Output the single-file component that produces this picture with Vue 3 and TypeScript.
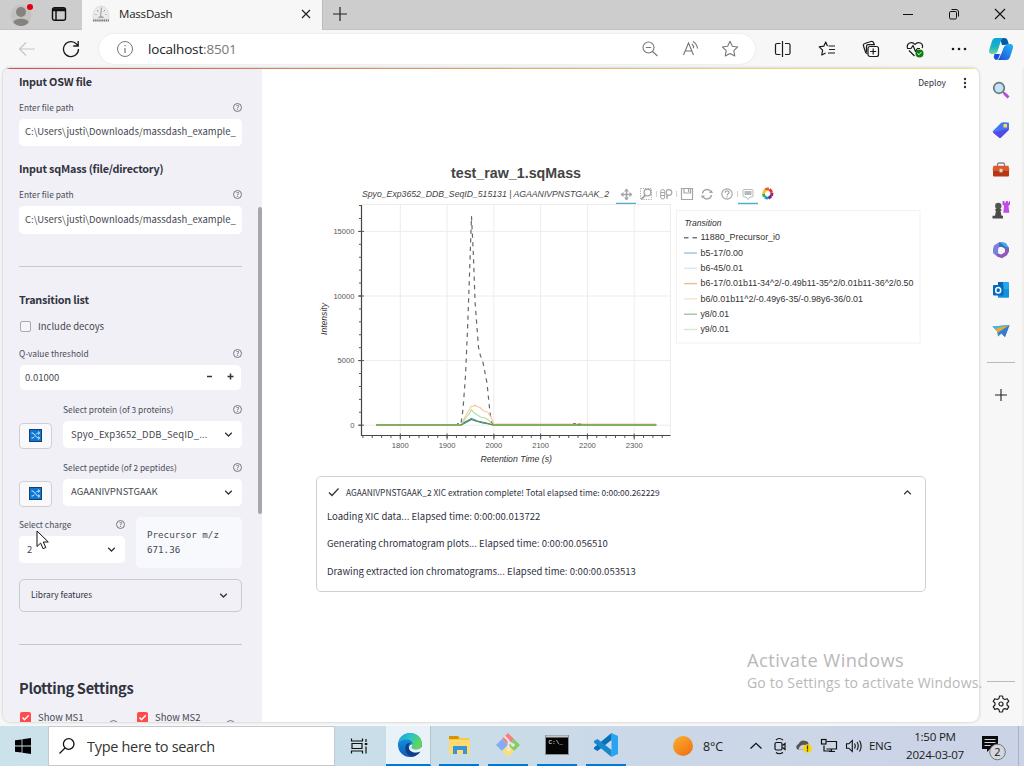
<script setup lang="ts">
interface LegendItem { label: string; color: string; width: number; dash?: string }

const X0 = 400.3, XS = 0.4678, Y0 = 425.2, YS = 0.01292
const px = (v: number): number => X0 + (v - 1800) * XS
const py = (v: number): number => Y0 - v * YS

const xMajor: number[] = [1800, 1900, 2000, 2100, 2200, 2300]
const yMajor: number[] = [0, 5000, 10000, 15000]
const xMinor: number[] = Array.from({ length: 33 }, (_, i) => 1720 + i * 20)
const yMinor: number[] = Array.from({ length: 18 }, (_, i) => i * 1000)

const legend: LegendItem[] = [
  { label: '11880_Precursor_i0', color: '#777', width: 79.5, dash: '4.5 4' },
  { label: 'b5-17/0.00', color: '#a3c6e0', width: 42.5 },
  { label: 'b6-45/0.01', color: '#dbe7f1', width: 42.5 },
  { label: 'b6-17/0.01b11-34^2/-0.49b11-35^2/0.01b11-36^2/0.50', color: '#e6be93', width: 213 },
  { label: 'b6/0.01b11^2/-0.49y6-35/-0.98y6-36/0.01', color: '#fbe3c6', width: 162.5 },
  { label: 'y8/0.01', color: '#a0c5a0', width: 28.5 },
  { label: 'y9/0.01', color: '#d3ead0', width: 28.5 },
]

const steps: string[] = [
  'Loading XIC data... Elapsed time: 0:00:00.013722',
  'Generating chromatogram plots... Elapsed time: 0:00:00.056510',
  'Drawing extracted ion chromatograms... Elapsed time: 0:00:00.053513',
]

const pickers = [
  { label: 'Select protein (of 3 proteins)', value: 'Spyo_Exp3652_DDB_SeqID_...', kind: 'protein' },
  { label: 'Select peptide (of 2 peptides)', value: 'AGAANIVPNSTGAAK', kind: 'peptide' },
]
</script>

<template>
  <div class="desktop">
    <header class="titlebar">
      <div class="profile">
        <svg width="24" height="28" viewBox="0 0 24 28"><circle cx="12" cy="14.500" r="10.500" fill="#c4c2c0" /><circle cx="12" cy="11" r="5" fill="#85837f" /><path d="M4.500 21.500c0-5 15-5 15 0c-3 4.500-12 4.500-15 0z" fill="#85837f" /><circle cx="21" cy="6" r="3" fill="#e1000f" /></svg>
      </div>
      <div class="tabmenu">
        <svg width="16" height="16" viewBox="0 0 16 16" fill="none" stroke="#111" stroke-width="1.400"><rect x="1.500" y="1.700" width="13" height="12.600" rx="2" /><path d="M1.500 4.500h13M5 4.500v9.500" /><path d="M2 3.200h12" stroke-width="2" /></svg>
      </div>
      <div class="tab">
        <svg width="18" height="18" viewBox="0 0 18 18"><path d="M1.500 14C0 7 4 1 9 1s9 6 7.500 13z" fill="#ebebeb" stroke="#d3d3d3" stroke-width=".7" /><path d="M9.400 2.500L8.500 13M3.500 9l1 1M5 5l1.300 1.500M13 5l-1.300 1.500M14.500 9l-1 1" stroke="#999" stroke-width="1" /><path d="M6 13c1-3 5-3 6 0z" fill="#aaa" /><path d="M1 15.500h16" stroke="#777" stroke-width="2.200" stroke-dasharray="1.500 .6" /></svg>
        <span class="tabname">MassDash</span>
        <svg class="tabclose" width="10" height="10" viewBox="0 0 10 10" stroke="#222" stroke-width="1.200"><path d="M1 1l8 8M9 1l-8 8" /></svg>
      </div>
      <svg class="newtab" width="14" height="14" viewBox="0 0 14 14" stroke="#222" stroke-width="1.200"><path d="M0 7h14M7 0v14" /></svg>
      <div class="wincontrols">
        <svg width="12" height="12" viewBox="0 0 12 12" stroke="#111"><path d="M1 6.500h10" /></svg>
        <svg width="12" height="12" viewBox="0 0 12 12" fill="none" stroke="#111"><rect x="1.500" y="3.500" width="7" height="7.500" rx="1.300" /><path d="M3.500 1.500h4.500q2.500 0 2.500 2.500v4.500" /></svg>
        <svg width="12" height="12" viewBox="0 0 12 12" stroke="#111" stroke-width="1.100"><path d="M1 1l10 10M11 1l-10 10" /></svg>
      </div>
    </header>

    <nav class="toolbar">
      <div class="navbtn"><svg width="18" height="16" viewBox="0 0 18 16" fill="none" stroke="#c6c6c6" stroke-width="1.200"><path d="M17 8H1.500M8 1.500L1.500 8L8 14.500" /></svg></div>
      <div class="navbtn"><svg width="18" height="18" viewBox="0 0 18 18" fill="none" stroke="#1b1b1b" stroke-width="1.300"><path d="M16.500 9A7.500 7.500 0 1 1 14.500 4L16 5.500M16.200 1v5h-5" /></svg></div>
      <div class="address">
        <svg class="info" width="18" height="18" viewBox="0 0 18 18" fill="none" stroke="#777"><circle cx="9" cy="9" r="7.500" /><path d="M9 8v5M9 5v1.300" stroke-width="1.200" /></svg>
        <span class="url">localhost<i>:8501</i></span>
        <div class="addrtools">
          <svg width="18" height="18" viewBox="0 0 18 18" fill="none" stroke="#777" stroke-width="1.100"><circle cx="7.500" cy="7.500" r="5.500" /><path d="M4.800 7.500h5.400M11.500 11.500l5 4.500" /></svg>
          <svg width="18" height="18" viewBox="0 0 18 18" fill="none" stroke="#777" stroke-width="1.100"><path d="M2.500 15L7.500 3L12.500 15M4.200 11h6.600M10.800 4q2 1.500 1.700 4.200M12 1.500q4 2.500 4.500 7" /></svg>
          <svg width="18" height="18" viewBox="0 0 18 18" fill="none" stroke="#777" stroke-width="1.100" stroke-linejoin="round"><path d="M9 1.300l2.350 4.900 5.350.75-3.900 3.750.95 5.300L9 13.500 4.250 16l.95-5.300L1.300 6.950l5.350-.75z" /></svg>
        </div>
      </div>
      <div class="tools">
        <svg width="18" height="18" viewBox="0 0 18 18" fill="none" stroke="#1b1b1b" stroke-width="1.200"><path d="M6.500 3.500H3q-1.500 0-1.500 1.500v8q0 1.500 1.500 1.500h3.500M11 3.500h3.500q1.500 0 1.500 1.500v8q0 1.500-1.500 1.500H11M8.500 1v16" /></svg>
        <svg width="18" height="18" viewBox="0 0 18 18" fill="none" stroke="#1b1b1b" stroke-width="1.200" stroke-linejoin="round"><path d="M10.500 6H17M11 9.500h6M10 13h7M9.500 6L7.700 2 5.800 6.200 1.200 6.800l3.400 3.400-.8 4.800 3.800-2" /></svg>
        <svg width="18" height="18" viewBox="0 0 18 18" fill="none" stroke="#1b1b1b" stroke-width="1.200"><rect x="6" y="6.500" width="10.500" height="10" rx="2" /><path d="M11.200 8.500v6M8.200 11.500h6M5.500 13.500Q4 13.500 3.500 12L1.500 6q-.5-2 1.300-2.500L9 1.500q2-.5 2.700 1.500l.5 1.500M4.500 12V6.500q0-1.800 1.800-1.800H13" /></svg>
        <svg width="18" height="18" viewBox="0 0 18 18" fill="none" stroke="#1b1b1b" stroke-width="1.200" stroke-linejoin="round"><path d="M1.500 8C0 3.500 6 .5 9 4.500C12 .5 18 3.500 16.200 8M3 10.500l5.500 5.500M1 8.500h4l2-3 2.500 6 1.800-3H14" /><circle cx="13.500" cy="13.500" r="4" fill="#107c10" stroke="none" /><path d="M11.500 13.500l1.500 1.200 2.300-2.500" stroke="#fff" stroke-width="1" /></svg>
        <svg width="18" height="18" viewBox="0 0 18 18" fill="#1b1b1b"><circle cx="3" cy="9" r="1.300" /><circle cx="9" cy="9" r="1.300" /><circle cx="15" cy="9" r="1.300" /></svg>
      </div>
      <div class="copilot">
        <svg width="26" height="26" viewBox="0 0 26 26">
          <defs><linearGradient id="cpa" x1="0" y1="0" x2="0" y2="1"><stop offset="0" stop-color="#09a5dc" /><stop offset=".55" stop-color="#18b3c4" /><stop offset="1" stop-color="#73d89a" /></linearGradient><linearGradient id="cpb" x1="0" y1="1" x2="1" y2="0"><stop offset="0" stop-color="#1747d8" /><stop offset="1" stop-color="#28b9f4" /></linearGradient></defs>
          <path d="M12 2h4.500q2.500 0 3.300 3l1.200 4H14z" fill="#075ba4" />
          <path d="M7.500 2H16q-2.500.5-3.500 4L9.500 15.500Q8.500 18 5.500 18H3.500Q.5 18 1.200 14L4 5q1-3 3.500-3z" fill="url(#cpa)" />
          <path d="M6.500 18H12l-1 3q-1 3-3 3-1.500 0-2.300-3z" fill="#1650db" />
          <path d="M19 8h3.500q3 0 2.500 4l-3 9q-1 3-3.500 3H8q3 0 4-3.500L15.500 11q1-3 3.500-3z" fill="url(#cpb)" />
          <path d="M13 9h5q-2 .8-3 4l-1.800 5H8.500q1.500-.8 2.200-3z" fill="#f7f7f7" />
        </svg>
      </div>
    </nav>

    <div class="workspace">
      <div class="page">
        <aside class="sidebar">
          <h3 class="first">Input OSW file</h3>
          <div class="lab l1"><span>Enter file path</span><b class="help">?</b></div>
          <div class="field path">C:\Users\justi\Downloads/massdash_example_</div>
          <h3 class="second">Input sqMass (file/directory)</h3>
          <div class="lab l1"><span>Enter file path</span><b class="help">?</b></div>
          <div class="field path tall">C:\Users\justi\Downloads/massdash_example_</div>
          <hr class="hr1" />
          <h3 class="third">Transition list</h3>
          <div class="check decoy"><i class="box"></i><span>Include decoys</span></div>
          <div class="lab l2"><span>Q-value threshold</span><b class="help">?</b></div>
          <div class="field number"><span>0.01000</span><svg width="30" height="9" viewBox="0 0 30 9" stroke="#31333f" stroke-width="1.500"><path d="M1 4.500h5M21.500 4.500h6M24.500 1.500v6" /></svg></div>
          <div v-for="p in pickers" :key="p.kind" class="picker" :class="p.kind">
            <button class="shuffle" type="button"><svg width="13" height="13" viewBox="0 0 13 13"><rect x=".5" y=".5" width="12" height="12" fill="#0b78d7" stroke="#173f67" /><path d="M2.500 4H4l4.500 5H10M2.500 9H4l1.300-1.400M7 5.500L8.500 4H10M9 2.500L10.800 4 9 5.500M9 7.500L10.800 9 9 10.500" fill="none" stroke="#e8f4ff" stroke-width=".9" /></svg></button>
            <div class="pickmain">
              <div class="lab"><span>{{ p.label }}</span><b class="help">?</b></div>
              <div class="field select"><span>{{ p.value }}</span><svg class="chev" width="9" height="7" viewBox="0 0 9 7"><path d="M1.200 1.700l3.300 3.300 3.300-3.300" /></svg></div>
            </div>
          </div>
          <div class="charge">
            <div class="chargecol">
              <div class="lab"><span>Select charge</span><b class="help">?</b></div>
              <div class="field select"><span>2</span><svg class="chev" width="9" height="7" viewBox="0 0 9 7"><path d="M1.200 1.700l3.300 3.300 3.300-3.300" /></svg></div>
            </div>
            <pre class="code">Precursor m/z
671.36</pre>
          </div>
          <div class="expander"><span>Library features</span><svg class="chev" width="9" height="7" viewBox="0 0 9 7"><path d="M1.200 1.700l3.300 3.300 3.300-3.300" /></svg></div>
          <hr class="hr2" />
          <h2>Plotting Settings</h2>
          <div class="ms">
            <div v-for="m in ['Show MS1', 'Show MS2']" :key="m" class="check">
              <svg class="box on" width="11" height="11" viewBox="0 0 11 11"><path d="M2.500 5.500l2 2.200L8.800 3.300" fill="none" stroke="#fff" stroke-width="1.500" /></svg><span>{{ m }}</span><b class="help"></b>
            </div>
          </div>
          <div class="thumb"></div>
        </aside>

        <main class="content">
          <div class="apphead"><span>Deploy</span><svg width="4" height="12" viewBox="0 0 4 12" fill="#31333f"><circle cx="2" cy="2" r="1.200" /><circle cx="2" cy="6" r="1.200" /><circle cx="2" cy="10" r="1.200" /></svg></div>

          <svg class="chart" width="610" height="316" viewBox="316 156 610 316">
            <text class="ctitle" x="451" y="178" textLength="130" lengthAdjust="spacingAndGlyphs">test_raw_1.sqMass</text>
            <text class="csub" x="362" y="197" textLength="247" lengthAdjust="spacingAndGlyphs">Spyo_Exp3652_DDB_SeqID_515131 | AGAANIVPNSTGAAK_2</text>

            <g class="ctools" fill="none" stroke="#a3a6a9">
              <path d="M621 194.500h11M626.500 189v11" stroke-width="1.600" /><path d="M623.500 192l-3 2.500 3 2.500zM629.500 192l3 2.500-3 2.500zM624 191.500l2.500-3 2.500 3zM624 197.500l2.500 3 2.500-3z" fill="#a3a6a9" stroke="none" />
              <path d="M616 203.500h20M738 203.500h20" stroke="#4db0cc" stroke-width="1.300" />
              <rect x="640.500" y="188.500" width="11" height="11" stroke-dasharray="1.200 1.200" /><circle cx="647.500" cy="192.500" r="3.400" stroke-width="1.400" /><path d="M645 195.500l-3.500 3.500" stroke-width="1.800" />
              <path d="M656.500 191v6M676.500 191v6M737.500 191v6" stroke="#d4d4d4" />
              <rect x="660.700" y="189.500" width="4" height="9.500" rx="2" /><path d="M660.700 192.500h4M660.700 195.500h4" /><circle cx="669" cy="192.500" r="2.800" stroke-width="1.200" /><path d="M667 195v4" stroke-width="1.400" />
              <path d="M681.500 188.500h11v11h-11zM684 188.500v4.500h6.500v-4.500M688.500 189v3" stroke-width="1.200" />
              <path d="M702.500 193.500a4.500 4.500 0 0 1 8.500-1.500M711.500 195a4.500 4.500 0 0 1-8.500 1.500" stroke-width="1.400" /><path d="M709 193h4l-1.500-3zM701 195.500h4l-2.800 3z" fill="#a3a6a9" stroke="none" />
              <circle cx="727" cy="194" r="5.200" stroke-width="1.200" /><path d="M725.200 192.700q0-1.900 1.900-1.900t1.900 1.700q0 1-1.100 1.500-.8.500-.8 1.500M727.100 196.300v1.200" stroke-width="1.200" />
              <path d="M744 189.500h8q1 0 1 1v5.500q0 1-1 1h-2l-2 2.500-2-2.500h-2q-1 0-1-1v-5.500q0-1 1-1z" stroke="#b7babc" /><path d="M744.500 191h7v4h-7z" fill="#b7babc" stroke="none" />
              <g stroke-width="2.900"><path d="M765 189.700l4-1" stroke="#ef5a23" /><path d="M769.500 189.300l2.400 2.800" stroke="#e9353f" /><path d="M772 192.500l-.4 3.500" stroke="#a71c64" /><path d="M771.300 196l-3 2.300" stroke="#642a86" /><path d="M768 198.500l-3.300-1.500" stroke="#2190cf" /><path d="M764.300 196.800l-.9-3.300" stroke="#38ae50" /><path d="M763.400 193.300l2-3.500" stroke="#f4c61b" /></g>
            </g>

            <g stroke="#ececec"><path v-for="t in xMajor" :key="'gx' + t" :d="`M${px(t)} 205V435`" /><path v-for="t in yMajor" :key="'gy' + t" :d="`M362 ${py(t)}H670`" /><path d="M362 204.500h308.500v231" fill="none" /></g>
            <g stroke="#555"><path d="M361.500 205v230.500H670.500" fill="none" stroke="#444" stroke-width="1.200" /><path v-for="t in xMinor" :key="'mx' + t" :d="`M${px(t)} 435.500v2.500`" /><path v-for="t in yMinor" :key="'my' + t" :d="`M359 ${py(t)}h2.500`" /><path v-for="t in xMajor" :key="'tx' + t" :d="`M${px(t)} 433.500v6`" /><path v-for="t in yMajor" :key="'ty' + t" :d="`M358 ${py(t)}h6`" /></g>
            <text v-for="t in xMajor" :key="'lx' + t" class="tick" :x="px(t)" y="448.300" text-anchor="middle">{{ t }}</text>
            <text v-for="t in yMajor" :key="'ly' + t" class="tick" x="354.500" :y="py(t) + 2.800" text-anchor="end">{{ t }}</text>
            <text class="axis" x="480.500" y="462" textLength="71.500" lengthAdjust="spacingAndGlyphs">Retention Time (s)</text>
            <text class="axis" x="0" y="0" transform="translate(327 335) rotate(-90)" textLength="32" lengthAdjust="spacingAndGlyphs">Intensity</text>

            <g fill="none" stroke-linejoin="round">
              <path d="M376 425H456l5-1.500 2-14 2.500-34 2-45 1.800-50 2.200-64 1.800 36 1.800 50 3.400 45 2 8.500 2 4 4.500 23 2.200 22 2 17 2 3H656" stroke="#666" stroke-width="1.200" stroke-dasharray="4.300 4.300" />
              <path d="M376 425h85l4-3 6.500-3.500 6 2.500 9 2 6 2H656" stroke="#3d84b5" stroke-width="1.200" />
              <path d="M376 425h85l4-8 4-7 2.500-4 2 .5 1.500-1.500 2 1.500 3 1 3.500 3.500 4 1 3.500 5 3 7.500 2-.5H656" stroke="#fbc795" stroke-width="1.100" />
              <path d="M376 425h85l4-6 4-5 2.500-4.500 2 3 4 2.500 3 2 5 1 4 3 3 4H656" stroke="#afdda5" stroke-width="1.100" />
              <path d="M376 425h85l4-2 6.500-3.500 4 1.500 7 2 6.500 1 5 1H656" stroke="#5b8c4b" stroke-width="1.200" />
              <path d="M376 424.800h84M493 424.800H656.500" stroke="#86ac60" stroke-width="1.800" />
              <path d="M573 423.500h3M578 424h3M457 423.500h2" stroke="#666" stroke-width=".8" />
            </g>

            <rect x="676.500" y="210.500" width="243.500" height="132.500" fill="#fff" stroke="#f2f2f2" />
            <text class="axis" x="684.500" y="226" textLength="37" lengthAdjust="spacingAndGlyphs">Transition</text>
            <g v-for="(l, i) in legend" :key="l.label">
              <path :d="`M684 ${237.700 + i * 15.300}h13`" :stroke="l.color" stroke-width="1.400" :stroke-dasharray="l.dash" />
              <text class="leg" x="700.500" :y="240.300 + i * 15.300" :textLength="l.width" lengthAdjust="spacingAndGlyphs">{{ l.label }}</text>
            </g>
          </svg>

          <section class="status">
            <div class="statushead"><svg width="12" height="10" viewBox="0 0 12 10"><path d="M1 5.500l3 3L10.500 1.500" fill="none" stroke="#31333f" stroke-width="1.300" /></svg><span>AGAANIVPNSTGAAK_2 XIC extration complete! Total elapsed time: 0:00:00.262229</span><svg class="chev" width="9" height="7" viewBox="0 0 9 7"><path d="M1.200 5.200l3.300-3.300 3.300 3.300" /></svg></div>
            <p v-for="s in steps" :key="s">{{ s }}</p>
          </section>
        </main>
      </div>

      <div class="edgebar">
        <svg width="18" height="18" viewBox="0 0 18 18"><circle cx="7" cy="7" r="5.300" fill="#bfe3f7" stroke="#6f7479" stroke-width="1.700" /><path d="M11 11l2 2" stroke="#777" stroke-width="2" /><path d="M12.500 12.500l4 4" stroke="#c044e4" stroke-width="3" /></svg>
        <svg width="18" height="18" viewBox="0 0 18 18"><path d="M1 10L9 2q.8-.8 2-.8l5 .3q1 0 1 1v5q0 1-.8 2L9 16.500q-1 1-2 0L1 11.500q-.6-.7 0-1.500z" fill="#4177f2" /><path d="M9 16.500q-1 1-2 0L1 11.500 17 7.500q0 1-.8 2z" fill="#5549e8" /><rect x="11.500" y="3" width="3.500" height="3.500" fill="#ffd95a" /></svg>
        <svg width="18" height="18" viewBox="0 0 18 18"><path d="M5.500 5V3.500q0-1.500 1.500-1.500h4q1.500 0 1.500 1.500V5" fill="none" stroke="#7f858b" stroke-width="1.300" /><path d="M1.500 4.800h15l1 4.500H.5z" fill="#df5a28" /><path d="M1 9.300h16v5.200q0 1-1 1H2q-1 0-1-1z" fill="#b83712" /><rect x="7.500" y="7.800" width="3" height="3.500" fill="#d8d8d8" /></svg>
        <svg width="18" height="18" viewBox="0 0 18 18"><path d="M10.500 0h2v1.500H14V0h2v1.500h1V0h1v3.800l-1.500 1 .8 7h-6l.8-7-1.600-1z" fill="#c04be8" /><circle cx="6.300" cy="5" r="3.200" fill="#555" /><path d="M3.300 8h6v1.700H8.500l1 5H11v2.800H.5v-2.800H3l1-5h-.7z" fill="#4b4b4b" /></svg>
        <svg width="18" height="18" viewBox="0 0 18 18"><path d="M7.500 1l6 1 3.500 5-1 5-4-5-5-1-3 4.500V4.500z" fill="#3a68c9" /><path d="M7.500 1L2 4.500 1 8v4l4 3.500L6.500 10 7 6z" fill="#7b80dd" /><path d="M5 15.500l5 1.800 5-3 2-4V7l-4.500-.5.5 4.500-4 2.500-4-1.500z" fill="#8e59b9" /><path d="M9 5.800l3 1.200 1 3-2 2.500-3 .2L6 10l.5-3z" fill="#f7f7f7" /><path d="M7.500 1l6 1 3.500 5-4-1.500z" fill="#37b3e9" /></svg>
        <svg width="18" height="18" viewBox="0 0 18 18"><path d="M6 1h10q1 0 1 1v14.500H6z" fill="#28a8ea" /><path d="M6 1h5v5H6z" fill="#0a65b5" /><path d="M5 9l12-1v7.500q0 1-1 1H6z" fill="#1490df" /><rect x="1" y="4" width="10.500" height="10.500" rx="1" fill="#0669b9" /><ellipse cx="6.200" cy="9.200" rx="2.500" ry="2.800" fill="none" stroke="#fff" stroke-width="1.500" /></svg>
        <svg width="18" height="18" viewBox="0 0 18 18"><path d="M.5 4.500l17-1.500L13 15 9.500 11.500 6 14.500 5 9z" fill="#2685d3" /><path d="M.5 4.500l17-1.500L5 9z" fill="#43b8e8" /><path d="M3 7l14.500-4L6 10.500l.5 4L5 9z" fill="#f4a82a" /><path d="M17.500 3L13 15 9.500 11.500z" fill="#3c77d2" /></svg>
        <i class="edgeline top"></i>
        <svg class="plus" width="14" height="14" viewBox="0 0 14 14" stroke="#222" stroke-width="1.100"><path d="M1 7h12M7 1v12" /></svg>
        <i class="edgeline low"></i>
        <svg class="gear" width="18" height="18" viewBox="0 0 18 18" fill="none" stroke="#222" stroke-width="1.200" stroke-linejoin="round"><path d="M7.500 1h3l.5 2.500 1.700 1 2.500-.8 1.600 2.700L15 8v2l1.800 1.700-1.600 2.700-2.500-.8-1.700 1-.5 2.400h-3L7 14.600l-1.700-1-2.500.8-1.600-2.700L3 10V8L1.200 6.400l1.600-2.700 2.500.8 1.700-1z" /><circle cx="9" cy="9" r="2" /></svg>
      </div>
    </div>

    <div class="watermark"><strong>Activate Windows</strong><span>Go to Settings to activate Windows.</span></div>
    <svg class="cursor" width="14" height="20" viewBox="0 0 14 20"><path d="M1 1v15.500l3.600-3.400 2.500 5.600 2.700-1.200-2.500-5.500h5z" fill="#fff" stroke="#111" stroke-linejoin="round" /></svg>

    <footer class="taskbar">
      <div class="start"><svg width="16" height="16" viewBox="0 0 16 16"><path d="M0 2.300L6.600 1.400V7.600H0zM7.400 1.300L16 0V7.600H7.400zM0 8.400h6.600v6.200L0 13.700zM7.400 8.400H16V16L7.400 14.800z" /></svg></div>
      <div class="search"><svg width="18" height="18" viewBox="0 0 18 18" fill="none" stroke="#111" stroke-width="1.300"><circle cx="10.700" cy="7" r="5.300" /><path d="M7 11L1.500 16.500" /></svg><span>Type here to search</span></div>
      <div class="task view"><svg width="18" height="18" viewBox="0 0 18 18" fill="none" stroke="#111" stroke-width="1.200"><path d="M1.500 1.500v2.500h11V1.500M1.500 16.500V14h11v2.500M2 6.500h10v5H2zM16 2v3M16 9.500v7" /><rect x="14.800" y="6" width="2.500" height="2" fill="#111" stroke="none" /></svg></div>
      <div class="task active">
        <svg width="26" height="26" viewBox="0 0 26 26"><defs><linearGradient id="eg" x1="0" y1="0" x2="1" y2=".5"><stop offset="0" stop-color="#199edb" /><stop offset=".5" stop-color="#2cc4c8" /><stop offset="1" stop-color="#66d654" /></linearGradient><linearGradient id="eb" x1="0" y1="0" x2="0" y2="1"><stop offset="0" stop-color="#1b9de2" /><stop offset="1" stop-color="#0b5cbf" /></linearGradient></defs><circle cx="13" cy="13" r="12" fill="url(#eb)" /><path d="M1 12C2 5 7 1 13 1c7 0 12 5 12 10.500 0 4-3 6-6 6-2.500 0-4.500-.8-4.500-2 0-1 1-1.500 1-3.200C15.500 9.500 13 7.500 9.500 7.500 5.500 7.500 2 9.500 1 12z" fill="url(#eg)" /><path d="M9.500 12c-3 5 0 12 6 12.700 3.500-.7 6.500-2.500 8-5.200-5 2.500-11.500.5-12-4.500 0-1.500.5-3 1.500-4q-2 0-3.500 1z" fill="#103f85" /><path d="M15.500 12.500c0 1.500-1 2-1 3 0 1.200 2 2 4.500 2 2.200 0 4.200-.8 5.300-2.500H26v5l-2.500-.5c-5 2.500-11.500.5-11.500-4 0-1.500 1.500-3.500 3.500-3z" fill="#e9f2f8" /></svg>
      </div>
      <div class="tasks">
        <div class="task run"><svg width="24" height="24" viewBox="0 0 24 24"><path d="M2 3h9l2 2h9v16H2z" fill="#f7c945" /><path d="M2 3h9l1.500 2L11 6H2z" fill="#d69500" /><path d="M2 7h21v14H2z" fill="#ffda73" /><path d="M6 21v-8h14v8h-4v-4h-6v4z" fill="#3994d8" /></svg></div>
        <div class="task run"><svg width="26" height="26" viewBox="0 0 26 26"><path d="M13 1l6 6-6 6-6-6z" fill="#f38180" /><path d="M19 7l6 6-6 6-6-6z" fill="#8acb63" /><path d="M7 7l6 6-6 6-6-6z" fill="#82adf4" /><path d="M13 13l6 6-6 6-6-6z" fill="#fade7b" /><path d="M9.500 4.500l4 4v9M13.500 9.500l4.500 3.500" stroke="#e4eaf0" stroke-width="1.800" fill="none" /><circle cx="13.500" cy="17.500" r="1.800" fill="#e4eaf0" /><circle cx="18" cy="13" r="1.800" fill="#e4eaf0" /></svg></div>
        <div class="task run cmdtask"><svg width="24" height="20" viewBox="0 0 24 20"><rect x=".5" y=".5" width="23" height="19" fill="#050505" stroke="#8a8f93" /><path d="M1 1.500h22" stroke="#c5c9cc" stroke-width="2" /><text x="3.500" y="9" class="cmd">C:\_</text></svg></div>
        <div class="task run"><svg width="26" height="26" viewBox="0 0 26 26"><path d="M18.500 1L25 4v18l-6.500 3z" fill="#2aa4f1" /><path d="M18.500 1v7L4.500 19 1 17v-1.500z" fill="#0870b8" /><path d="M18.500 25v-7L4.500 7 1 9v1.500z" fill="#1588ce" /></svg></div>
      </div>
      <div class="weather"><i></i><span>8°C</span></div>
      <div class="tray">
        <svg width="14" height="10" viewBox="0 0 14 10" fill="none" stroke="#111" stroke-width="1.300"><path d="M1.500 7.500L7 2.300l5.500 5.200" /></svg>
        <svg class="meet" width="16" height="18" viewBox="0 0 16 18" fill="none" stroke="#111" stroke-width="1.200"><rect x="3" y="5.500" width="7" height="7.500" rx="1.500" /><path d="M10.500 8.500l2.500-2v6l-2.500-2M4 3q3-3 7 0M4 15.500q3 2.500 7 0" /></svg>
        <svg width="18" height="16" viewBox="0 0 18 16"><path d="M2 11q-2-3 1.500-5Q6 1 10.500 3q3 0 3 3.500v5H3q-.6 0-1-.5z" fill="#555" /><path d="M3.500 11.500Q5 6 10 7v4.500z" fill="#cfcfcf" /><circle cx="12.500" cy="10.500" r="4.300" fill="#fbd700" /><path d="M12.500 7.500v4M12.500 12.300v1.200" stroke="#333" stroke-width="1.300" /></svg>
        <svg width="18" height="16" viewBox="0 0 18 16" fill="none" stroke="#111" stroke-width="1.200"><path d="M6.500 3.500h10v7.500h-10M4 7.500v5.500h8M9 13.500h6M11.500 11v2.500" /><rect x="1.500" y="1.500" width="4.500" height="4.500" /></svg>
        <svg width="18" height="16" viewBox="0 0 18 16" fill="none" stroke="#111" stroke-width="1.100"><path d="M1.500 5.800h2.300L7.300 2.500v11L3.800 10.200H1.500zM9.500 5.500q1.500 2.500 0 5M12 4q2.500 4 0 8M14.500 2.500q3.300 5.500 0 11" /></svg>
        <span class="lang">ENG</span>
      </div>
      <div class="clock"><span>1:50 PM</span><span>2024-03-07</span></div>
      <div class="notify"><svg width="26" height="26" viewBox="0 0 26 26"><path d="M1 1h16v13H9l-3 3v-3H1z" fill="#0a0a0a" /><path d="M3.500 4.500h11M3.500 7.500h11M3.500 10.500h6" stroke="#cbd3e6" /><circle cx="16.500" cy="17" r="7.800" fill="#d4d7dd" stroke="#777" /><text x="16.500" y="21" text-anchor="middle" class="badge">2</text></svg></div>
      <i class="showdesk"></i>
    </footer>
  </div>
</template>

<style>
body { margin: 0; overflow: hidden; }
</style>

<style scoped>
* { box-sizing: border-box; }
svg { display: block; flex: none; }
.desktop { position: relative; width: 1024px; height: 766px; display: flex; flex-direction: column; background: #f7f7f7; overflow: hidden; font-family: "Open Sans", "Noto Sans", sans-serif; color: #1b1b1b; white-space: nowrap; }
.titlebar { height: 30px; background: #cdcdcd; display: flex; align-items: center; box-shadow: inset 0 -1px #c2c2c2; flex: none; }
.profile { width: 42px; display: flex; justify-content: center; height: 28px; }
.tabmenu { width: 40px; padding-left: 9px; padding-bottom: 2px; }
.tab { width: 241px; height: 30px; background: #f7f7f7; display: flex; align-items: center; padding: 0 11px 2px 10px; border-right: 1px solid #bbb; }
.tabname { margin-left: 9px; margin-top: -1px; font-size: 11.500px; letter-spacing: -.2px; }
.tabclose { margin-left: auto; }
.newtab { margin-left: 10px; margin-top: -2px; }
.wincontrols { margin-left: auto; display: flex; gap: 34px; padding-right: 18px; margin-top: -2px; }
.toolbar { height: 38px; display: flex; align-items: center; flex: none; }
.navbtn { width: 44px; display: flex; justify-content: center; flex: none; }
.navbtn:first-child { margin-left: 5px; }
.address { width: 656px; height: 30px; margin-left: 6px; border-radius: 15px; background: #fff; box-shadow: 0 0 2px #ddd; display: flex; align-items: center; padding: 0 16px 0 17px; flex: none; }
.url { margin-left: 14px; font-size: 13.500px; letter-spacing: -.17px; }
.url i { font-style: normal; color: #777; }
.addrtools { margin-left: auto; display: flex; gap: 22px; }
.tools { display: flex; gap: 26px; margin-left: 19px; }
.copilot { margin-left: auto; margin-right: 10px; }
.workspace { height: 658px; display: flex; flex: none; }
.page { margin-left: 3px; width: 976px; height: 654px; background: #fff; border-radius: 7px 7px 8px 8px; overflow: hidden; display: flex; flex: none; box-shadow: 0 0 3px #bbb; position: relative; font-family: "Noto Sans CJK SC", "Noto Sans", sans-serif; color: #31333f; }
.page::before { content: ""; position: absolute; left: 0; right: 0; top: 0; height: 1px; background: linear-gradient(90deg, #d04f4f, #d99460 40%, #e8dc7c 80%, #eee78c); z-index: 2; }
.sidebar { width: 259px; height: 654px; background: #f0f0f6; padding: 4px 20px 0 16px; display: flex; flex-direction: column; flex: none; position: relative; overflow: hidden; }
.sidebar > * { flex: none; }
h3 { margin: 0; font-size: 10.800px; line-height: 18px; font-weight: 700; height: 18px; letter-spacing: -.2px; }
.second { margin-top: 13px; }
.third { margin-top: 23px; }
.lab { display: flex; justify-content: space-between; align-items: center; height: 18px; font-size: 8.400px; line-height: 18px; color: #4b4d57; }
.l1 { margin-top: 8px; }
.l2 { margin-top: 9px; }
.help { width: 9px; height: 9px; border: .8px solid #74767f; border-radius: 50%; font-size: 6.500px; line-height: 7.500px; text-align: center; font-weight: 400; color: #555; flex: none; }
.field { background: #fff; border-radius: 4.500px; display: flex; align-items: center; font-size: 9.500px; color: #464852; }
.path { margin-top: 3px; height: 27px; padding: 0 6px 3px; overflow: hidden; letter-spacing: .02px; }
.path.tall { height: 28px; }
hr { margin: 0; border: 0; height: 1px; background: #c6c8d0; width: 223px; }
.hr1 { margin-top: 32px; }
.check { display: flex; align-items: center; height: 18px; font-size: 9.500px; line-height: 18px; padding-left: 1px; color: #464852; }
.check span { margin-left: 7px; }
.box { width: 11px; height: 11px; border: 1px solid #a8aab2; border-radius: 2px; background: #f6f6fa; }
.box.on { background: #ff4b4b; border: 0; }
.decoy { margin-top: 9px; }
.number { height: 25px; margin: 3px 1px 0; padding: 0 5px 2px 5px; justify-content: space-between; }
.picker { display: flex; justify-content: space-between; align-items: flex-end; height: 48px; }
.protein { margin-top: 10px; }
.peptide { margin-top: 10px; }
.shuffle { width: 33px; height: 26px; padding: 0 0 1px; display: flex; align-items: center; justify-content: center; background: #f9f9fb; border: 1px solid #cfd0d7; border-radius: 4px; margin-bottom: -1px; }
.pickmain { width: 179px; }
.select { height: 27px; margin-top: 3px; padding: 0 9px 2px 8px; justify-content: space-between; }
.protein .select { letter-spacing: .1px; }
.peptide .select { padding-bottom: 4px; }
.peptide .select .chev { margin-top: 3px; }
.select .chev { margin-top: 1px; }
.chev path { fill: none; stroke: #31333f; stroke-width: 1.300; }
.charge { display: flex; justify-content: space-between; height: 52px; margin-top: 11px; }
.chargecol { width: 106px; margin-top: -2px; }
.code { margin: 0; width: 106px; height: 51px; background: #f8f9fc; border-radius: 5px; padding: 10px 11px; font: 9.200px/15px "DejaVu Sans Mono", monospace; color: #464852; }
.expander { margin-top: 10px; height: 33px; border: 1px solid #c8c9cf; border-radius: 5px; display: flex; align-items: center; justify-content: space-between; padding: 0 13px 3px 11px; font-size: 8.400px; }
.expander .chev { margin-top: 2px; }
.hr2 { margin-top: 32px; }
h2 { margin: 31px 0 0; height: 24px; line-height: 24px; font-size: 14.600px; letter-spacing: -.33px; font-weight: 700; }
.ms { display: flex; margin-top: 8px; }
.ms .check { width: 117px; flex: none; }
.ms .help { margin: 15px 18px 0 auto; }
.thumb { position: absolute; right: 0; top: 139px; width: 4px; height: 307px; background: #a6a6ac; border-radius: 2px; }
.content { flex: 1; padding: 4px 0 0 54px; }
.apphead { height: 20px; display: flex; justify-content: flex-end; align-items: center; gap: 17px; padding-right: 12px; font-size: 8.500px; }
.apphead svg { margin-top: 1px; }
.chart { margin-top: 64px; font-family: "Liberation Sans", Arial, sans-serif; }
.ctitle { font-size: 14.500px; font-weight: 700; fill: #444; }
.csub { font-size: 9.300px; font-style: italic; fill: #444; }
.tick { font-size: 7.600px; fill: #555; }
.axis { font-size: 8.900px; font-style: italic; fill: #333; }
.leg { font-size: 8.900px; fill: #333; }
.status { margin-top: 4px; width: 610px; height: 116px; border: 1px solid #cfd1d5; border-radius: 5px; padding: 5px 13px 0 10px; }
.statushead { display: flex; align-items: center; height: 21px; font-size: 8.370px; padding: 0 0 1px 1px; }
.statushead span { margin-left: 6px; }
.statushead .chev { margin-left: auto; }
.status p { margin: 0; height: 27.300px; line-height: 27.300px; font-size: 9.560px; }
.edgebar { width: 45px; padding-top: 12.500px; display: flex; flex-direction: column; align-items: center; border-right: 2px solid #f0eeeb; }
.edgebar > svg { height: 18px; margin-bottom: 22.200px; }
.edgeline { width: 28px; height: 1px; background: #b9b9b9; flex: none; }
.edgeline.top { margin-top: .100px; }
.edgebar .plus { height: 14px; margin: 25px 0 0; }
.edgeline.low { margin-top: 279px; }
.edgebar .gear { margin: 13px 0 0; }
.watermark { position: absolute; left: 747px; top: 648px; color: #b8b8b8; display: flex; flex-direction: column; }
.watermark strong { font-weight: 400; font-size: 18.300px; line-height: 24px; letter-spacing: .45px; }
.watermark span { font-size: 14px; line-height: 22px; letter-spacing: .17px; }
.cursor { position: absolute; left: 36px; top: 530px; }
.taskbar { height: 40px; flex: none; background: linear-gradient(90deg, #cbe2eb, #c9dde8 45%, #cbd8e8 62%, #cbd3e6); display: flex; align-items: center; }
.start { width: 48px; padding-left: 15px; flex: none; }
.search { width: 287px; height: 40px; background: #fff; border: 1px solid #c4c9cc; display: flex; align-items: center; padding-left: 9px; font-size: 14.500px; color: #333; flex: none; }
.search span { margin-left: 11px; letter-spacing: -.3px; }
.task { height: 40px; display: flex; align-items: center; justify-content: center; flex: none; }
.view { width: 51px; padding-right: 4px; }
.active { width: 45px; background: #e8f2f7; border-bottom: 2px solid #0078d7; border-right: 1px solid #b3c5d0; padding-left: 3px; }
.tasks { display: flex; gap: 9px; margin-left: 8px; }
.run { width: 40px; border-bottom: 2px solid #0078d7; }
.cmdtask { padding-right: 1px; }
.cmd { font: 6px "Liberation Mono", monospace; fill: #fff; }
.weather { display: flex; align-items: center; margin-left: 47px; font-size: 12.500px; width: 74px; flex: none; }
.weather i { width: 20px; height: 20px; border-radius: 50%; background: linear-gradient(145deg, #f5b32c, #f46a12); margin-right: 10px; }
.weather span { letter-spacing: -.1px; }
.tray { display: flex; align-items: center; gap: 7px; width: 153px; margin-left: 2px; flex: none; }
.meet { margin-left: 2px; }
.lang { font-size: 11.500px; letter-spacing: -.3px; margin: -1px 0 0 -1px; }
.clock { width: 66px; display: flex; flex-direction: column; align-items: center; font-size: 11.600px; line-height: 18px; letter-spacing: -.25px; padding-bottom: 1px; flex: none; }
.notify { margin-left: 13px; padding-top: 3px; }
.badge { font: 11px "Open Sans", sans-serif; fill: #111; }
.showdesk { width: 1px; height: 40px; background: #a9b3c6; margin-left: auto; margin-right: 5px; }
</style>
